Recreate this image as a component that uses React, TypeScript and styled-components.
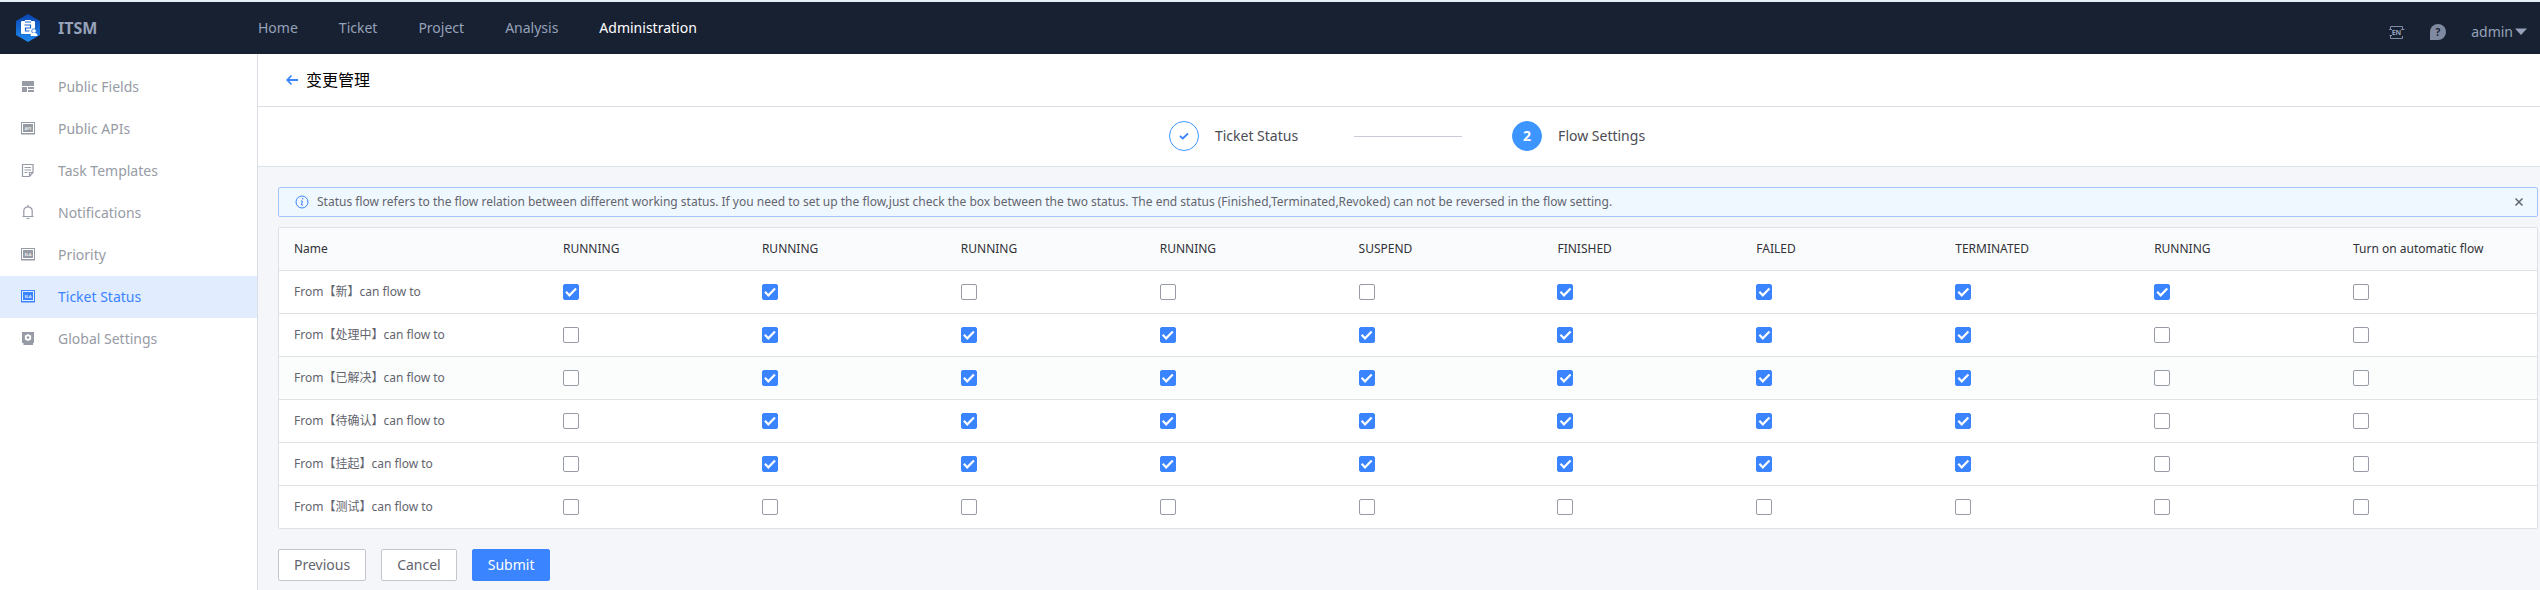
import React, { useState } from "react";
import styled, { createGlobalStyle } from "styled-components";

const GlobalStyle = createGlobalStyle`
  *, *::before, *::after { box-sizing: border-box; }
  body {
    margin: 0;
    background: #f5f6fa;
    color: #63656e;
    font: 14px/20px "Noto Sans", "Noto Sans CJK SC", sans-serif;
  }
  button, input { font: inherit; }
`;

const Page = styled.div`
  display: flex;
  flex-direction: column;
  min-height: 100vh;
`;

const Header = styled.header`
  display: flex;
  align-items: center;
  height: 54px;
  padding: 0 13px 0 16px;
  border-top: 2px solid #e4edf3;
  background: #182132;
  color: #96a2b9;
`;

const Brand = styled.a`
  display: flex;
  align-items: center;
  gap: 18px;
  width: 242px;
  color: #96a2b9;
  font-size: 16px;
  font-weight: 700;
  text-decoration: none;
`;

const TopNav = styled.nav`
  display: flex;
  flex: 1;
  gap: 41px;
`;

const TopLink = styled.a<{ $active?: boolean }>`
  color: ${(p) => (p.$active ? "#ffffff" : "#96a2b9")};
  text-decoration: none;
`;

const Tools = styled.div`
  display: flex;
  align-items: center;
  padding-top: 8px;
  gap: 25px;
`;

const ToolButton = styled.button`
  display: flex;
  align-items: center;
  gap: 2px;
  padding: 0;
  border: 0;
  background: none;
  color: #96a2b9;
  cursor: pointer;
`;

const Body = styled.div`
  display: flex;
  flex: 1;
`;

const Sidebar = styled.nav`
  flex: none;
  width: 258px;
  padding-top: 12px;
  border-right: 1px solid #dcdee5;
  background: #ffffff;
`;

const SideLink = styled.a<{ $active?: boolean }>`
  display: flex;
  align-items: center;
  gap: 22px;
  height: 42px;
  padding-left: 20px;
  background: ${(p) => (p.$active ? "#e1ecff" : "transparent")};
  color: ${(p) => (p.$active ? "#3a84ff" : "#979ba5")};
  text-decoration: none;

  svg { margin-bottom: 2px; }
`;

const Main = styled.main`
  flex: 1;
  min-width: 0;
`;

const TitleBar = styled.div`
  display: flex;
  align-items: center;
  gap: 8px;
  height: 53px;
  padding-left: 28px;
  border-bottom: 1px solid #dcdee5;
  background: #ffffff;
`;

const Title = styled.h1`
  margin: 0;
  color: #000000;
  font-size: 16px;
  font-weight: 400;
  line-height: 20px;
`;

const Steps = styled.ol`
  display: flex;
  align-items: center;
  justify-content: center;
  height: 60px;
  margin: 0;
  padding: 0 0 1px 16px;
  border-bottom: 1px solid #dde4eb;
  background: #ffffff;
  list-style: none;
`;

const Step = styled.li`
  display: flex;
  align-items: center;
  gap: 16px;
  color: #4a4c54;

  & + &::before {
    content: "";
    width: 108px;
    height: 1px;
    margin: 0 34px 0 56px;
    background: #c8ccd6;
  }
`;

const StepMark = styled.span<{ $current?: boolean }>`
  display: flex;
  align-items: center;
  justify-content: center;
  width: 30px;
  height: 30px;
  border: 1px solid #3d96ff;
  border-radius: 50%;
  background: ${(p) => (p.$current ? "#3d96ff" : "#ffffff")};
  color: ${(p) => (p.$current ? "#ffffff" : "#3a84ff")};
  font-weight: 700;
`;

const Content = styled.div`
  padding: 20px 2px 9px 20px;
`;

const Alert = styled.div`
  display: flex;
  align-items: center;
  gap: 8px;
  height: 30px;
  margin-bottom: 10px;
  padding: 0 14px 0 16px;
  border: 1px solid #a3c5fd;
  border-radius: 2px;
  background: #f0f8ff;
  font-size: 12px;
`;

const AlertText = styled.p`
  flex: 1;
  margin: 0;
`;

const TableFrame = styled.div`
  border: 1px solid #dfe0e5;
  border-radius: 2px;
  background: #ffffff;
`;

const Table = styled.table`
  width: 100%;
  border-spacing: 0;
  table-layout: fixed;
  font-size: 12px;
  text-align: left;
`;

const NameCol = styled.col`
  width: 269px;
`;

const HeadCell = styled.th`
  height: 43px;
  padding: 0 15px;
  border-bottom: 1px solid #dfe0e5;
  background: #fafbfd;
  color: #313238;
  font-weight: 400;
`;

const Row = styled.tr<{ $tinted?: boolean }>`
  background: ${(p) => (p.$tinted ? "#fbfdfd" : "#ffffff")};

  & > * {
    height: 43px;
    padding: 0 15px;
    border-bottom: 1px solid #dfe0e5;
  }

  &:last-child > * {
    height: 42px;
    border-bottom: 0;
  }
`;

const RowName = styled.th`
  font-weight: 400;
`;

const Check = styled.input`
  display: block;
  width: 16px;
  height: 16px;
  margin: 0;
  border: 1px solid #979ba5;
  border-radius: 2px;
  background: #ffffff;
  appearance: none;

  &:checked {
    border-color: #3a84ff;
    background: #3a84ff;
  }

  &:checked::after {
    content: "";
    display: block;
    height: 14px;
    background: #ffffff;
    clip-path: polygon(9% 54%, 20% 42%, 39% 62%, 81% 20%, 92% 31%, 39% 86%);
  }
`;

const Actions = styled.div`
  display: flex;
  gap: 15px;
  margin-top: 20px;
`;

const Button = styled.button<{ $primary?: boolean }>`
  height: 32px;
  padding: 0 15px;
  border: 1px solid ${(p) => (p.$primary ? "#3a84ff" : "#c4c6cc")};
  border-radius: 2px;
  background: ${(p) => (p.$primary ? "#3a84ff" : "#ffffff")};
  color: ${(p) => (p.$primary ? "#ffffff" : "#63656e")};
  cursor: pointer;
`;

const IconButton = styled.button`
  display: flex;
  padding: 0;
  border: 0;
  background: none;
  color: #63656e;
  cursor: pointer;
`;

const BackLink = styled.a`
  display: flex;
  color: #3a84ff;
`;

const IconText = styled.text`
  font-family: "Noto Sans", sans-serif;
  font-weight: 700;
  text-anchor: middle;
`;

const Logo = () => (
  <svg width="24" height="28" viewBox="0 0 24 28" aria-hidden="true">
    <defs>
      <linearGradient id="logoFill" x1="0" y1="0" x2="0" y2="1">
        <stop offset="0" stopColor="#0a45b0" />
        <stop offset="1" stopColor="#1f8af0" />
      </linearGradient>
    </defs>
    <path d="M12 0 24 7v14l-12 7L0 21V7z" fill="url(#logoFill)" />
    <path d="M6 7h3V6h6v1h3a1 1 0 0 1 1 1v12H6a1 1 0 0 1-1-1V8a1 1 0 0 1 1-1z" fill="#fff" />
    <path d="M9 8h6M8.500 11h6v3h-5v3h4" fill="none" stroke="#1765d2" strokeWidth="1.200" />
    <circle cx="18" cy="17" r="2.300" fill="#fff" stroke="#1765d2" strokeWidth=".8" />
    <path d="M14.500 22c0-2.500 1.500-3 3.500-3s3.500.5 3.500 3z" fill="#fff" />
  </svg>
);

const FieldsIcon = () => (
  <svg width="16" height="16" viewBox="0 0 16 16" fill="currentColor" aria-hidden="true">
    <path d="M2 3h12v5H2zM2 9h5v5H2zM8 9h6v2H8zM8 12h6v2H8z" />
  </svg>
);

const BadgeIcon = ({ label }: { label: string }) => (
  <svg width="16" height="16" viewBox="0 0 16 16" aria-hidden="true">
    <rect x="1.500" y="2.500" width="13" height="11" fill="none" stroke="currentColor" />
    <rect x="3" y="4" width="10" height="8" fill="currentColor" />
    <path d="M1 14.500h14" stroke="currentColor" strokeOpacity=".5" />
    <IconText x="8" y="9.500" fontSize="4" fill="#fff" fillOpacity=".85">{label}</IconText>
  </svg>
);

const TemplateIcon = () => (
  <svg width="16" height="16" viewBox="0 0 16 16" fill="none" stroke="currentColor" strokeWidth="1.200" aria-hidden="true">
    <path d="M2.500 2.500h10.500v8L9.500 14.500h-7zM13 10.500H9.500v4M4.500 5.500h6.500M4.500 8h6.500M4.500 10.500h3" />
  </svg>
);

const BellIcon = () => (
  <svg width="16" height="16" viewBox="0 0 16 16" fill="none" stroke="currentColor" strokeWidth="1.200" aria-hidden="true">
    <path d="M8 1v1.500M3.800 12V7a4.200 4.200 0 0 1 8.400 0v5M2.500 12.500h11M6.500 14.500h3" />
  </svg>
);

const SettingsIcon = () => (
  <svg width="16" height="16" viewBox="0 0 16 16" aria-hidden="true">
    <path d="M2 2h12v11h-1v2H3.500v-2H2z" fill="currentColor" />
    <circle cx="8" cy="7.500" r="2.200" fill="none" stroke="#fff" strokeWidth="1.800" />
    <path d="M8 4v7M4.800 5.700l6.400 3.600M4.800 9.300l6.400-3.600" stroke="#fff" strokeWidth="1.200" />
    <circle cx="8" cy="7.500" r="1.300" fill="currentColor" />
  </svg>
);

const LanguageIcon = () => (
  <svg width="16" height="16" viewBox="0 0 16 16" aria-hidden="true">
    <path d="M1.500 5V2.500h12V5M1.500 12v2.500h12V12M0 5.500h3M12 5.500h3.500M0.500 11.500H3" fill="none" stroke="#7f8ba2" />
    <IconText x="7.500" y="11" fontSize="7" fill="#96a2b9">EN</IconText>
  </svg>
);

const HelpIcon = () => (
  <svg width="16" height="16" viewBox="0 0 16 16" aria-hidden="true">
    <path d="M0 16V8a8 8 0 1 1 8 8z" fill="#7f89a0" />
    <IconText x="8" y="12" fontSize="10" fill="#182132">?</IconText>
  </svg>
);

const CaretIcon = () => (
  <svg width="12" height="8" viewBox="0 0 12 8" fill="currentColor" aria-hidden="true">
    <path d="M0 0.500h12L6 7z" />
  </svg>
);

const BackIcon = () => (
  <svg width="12" height="12" viewBox="0 0 12 12" fill="none" stroke="currentColor" strokeWidth="1.800" aria-hidden="true">
    <path d="M12 6H1.500M5.500 1.500 1.200 6l4.300 4.500" />
  </svg>
);

const TickIcon = () => (
  <svg width="10" height="8" viewBox="0 0 10 8" fill="none" stroke="currentColor" strokeWidth="1.800" aria-hidden="true">
    <path d="M1 4l2.800 2.500L9 1.500" />
  </svg>
);

const InfoIcon = () => (
  <svg width="14" height="14" viewBox="0 0 14 14" fill="none" stroke="#3a84ff" aria-hidden="true">
    <circle cx="7" cy="7" r="6" />
    <path d="M7.800 3v1.500M5.800 6h1.500l-.8 4h1.500" />
  </svg>
);

const CloseIcon = () => (
  <svg width="8" height="8" viewBox="0 0 8 8" stroke="currentColor" strokeWidth="1.500" aria-hidden="true">
    <path d="M.5.5l7 7M7.500.5l-7 7" />
  </svg>
);

const topLinks = ["Home", "Ticket", "Project", "Analysis", "Administration"];

const sideLinks = [
  { label: "Public Fields", icon: <FieldsIcon /> },
  { label: "Public APIs", icon: <BadgeIcon label="API" /> },
  { label: "Task Templates", icon: <TemplateIcon /> },
  { label: "Notifications", icon: <BellIcon /> },
  { label: "Priority", icon: <BadgeIcon label="SLA" /> },
  { label: "Ticket Status", icon: <BadgeIcon label="SLA" /> },
  { label: "Global Settings", icon: <SettingsIcon /> },
];

const columns = [
  "RUNNING", "RUNNING", "RUNNING", "RUNNING", "SUSPEND",
  "FINISHED", "FAILED", "TERMINATED", "RUNNING", "Turn on automatic flow",
];

const statuses = [
  { name: "新", flows: "1100011110" },
  { name: "处理中", flows: "0111111100" },
  { name: "已解决", flows: "0111111100" },
  { name: "待确认", flows: "0111111100" },
  { name: "挂起", flows: "0111111100" },
  { name: "测试", flows: "0000000000" },
];

export default function App() {
  const [flows, setFlows] = useState(statuses.map((s) => [...s.flows].map((c) => c === "1")));
  const [alertOpen, setAlertOpen] = useState(true);

  const toggle = (row: number, col: number) =>
    setFlows((all) => all.map((r, i) => (i === row ? r.map((v, j) => (j === col ? !v : v)) : r)));

  return (
    <Page>
      <GlobalStyle />
      <Header>
        <Brand href="#home"><Logo />ITSM</Brand>
        <TopNav aria-label="Main">
          {topLinks.map((label) => (
            <TopLink key={label} href={`#${label}`} $active={label === "Administration"}>{label}</TopLink>
          ))}
        </TopNav>
        <Tools>
          <ToolButton type="button" aria-label="Language"><LanguageIcon /></ToolButton>
          <ToolButton type="button" aria-label="Help"><HelpIcon /></ToolButton>
          <ToolButton type="button">admin<CaretIcon /></ToolButton>
        </Tools>
      </Header>
      <Body>
        <Sidebar aria-label="Administration">
          {sideLinks.map(({ label, icon }) => (
            <SideLink key={label} href={`#${label}`} $active={label === "Ticket Status"}>{icon}{label}</SideLink>
          ))}
        </Sidebar>
        <Main>
          <TitleBar>
            <BackLink href="#back" aria-label="Back"><BackIcon /></BackLink>
            <Title>变更管理</Title>
          </TitleBar>
          <Steps>
            <Step><StepMark><TickIcon /></StepMark>Ticket Status</Step>
            <Step><StepMark $current>2</StepMark>Flow Settings</Step>
          </Steps>
          <Content>
            {alertOpen && (
              <Alert role="note">
                <InfoIcon />
                <AlertText>
                  Status flow refers to the flow relation between different working status. If you need to set up the
                  flow,just check the box between the two status. The end status (Finished,Terminated,Revoked) can not
                  be reversed in the flow setting.
                </AlertText>
                <IconButton type="button" aria-label="Close" onClick={() => setAlertOpen(false)}><CloseIcon /></IconButton>
              </Alert>
            )}
            <TableFrame>
              <Table>
                <colgroup>
                  <NameCol />
                  {columns.map((_, i) => <col key={i} />)}
                </colgroup>
                <thead>
                  <tr>
                    <HeadCell scope="col">Name</HeadCell>
                    {columns.map((label, i) => <HeadCell key={i} scope="col">{label}</HeadCell>)}
                  </tr>
                </thead>
                <tbody>
                  {statuses.map(({ name }, r) => (
                    <Row key={name} $tinted={r === 2}>
                      <RowName scope="row">{`From【${name}】can flow to`}</RowName>
                      {columns.map((label, c) => (
                        <td key={c}>
                          <Check
                            type="checkbox"
                            aria-label={`${name}: ${label}`}
                            checked={flows[r][c]}
                            onChange={() => toggle(r, c)}
                          />
                        </td>
                      ))}
                    </Row>
                  ))}
                </tbody>
              </Table>
            </TableFrame>
            <Actions>
              <Button type="button">Previous</Button>
              <Button type="button">Cancel</Button>
              <Button type="submit" $primary>Submit</Button>
            </Actions>
          </Content>
        </Main>
      </Body>
    </Page>
  );
}
